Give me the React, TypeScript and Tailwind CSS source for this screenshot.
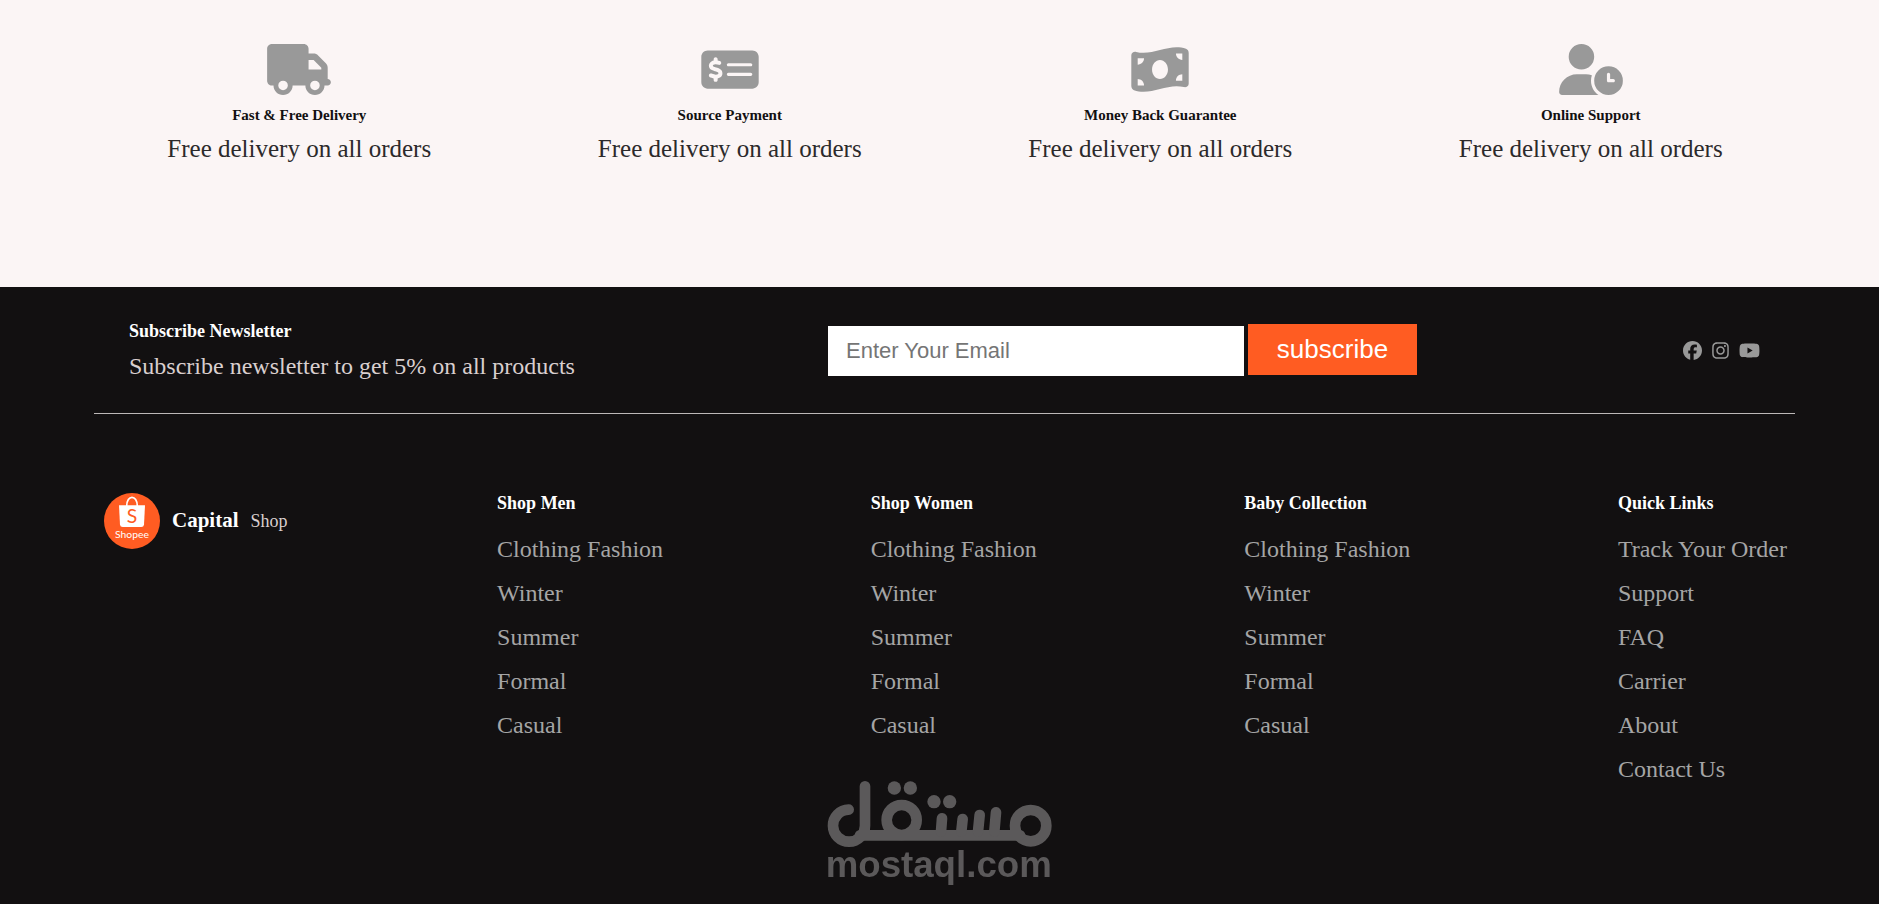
import React from "react";
import {
  FaFacebook,
  FaInstagram,
  FaMoneyBillWave,
  FaMoneyCheckDollar,
  FaTruck,
  FaUserClock,
  FaYoutube,
} from "react-icons/fa6";

const features = [
  { icon: FaTruck, title: "Fast & Free Delivery" },
  { icon: FaMoneyCheckDollar, title: "Source Payment" },
  { icon: FaMoneyBillWave, title: "Money Back Guarantee" },
  { icon: FaUserClock, title: "Online Support" },
];

const clothes = ["Clothing Fashion", "Winter", "Summer", "Formal", "Casual"];

const columns = [
  { title: "Shop Men", links: clothes },
  { title: "Shop Women", links: clothes },
  { title: "Baby Collection", links: clothes },
  {
    title: "Quick Links",
    links: ["Track Your Order", "Support", "FAQ", "Carrier", "About", "Contact Us"],
  },
];

const socials = [
  { icon: FaFacebook, label: "Facebook", size: "h-[19px] w-[19px]" },
  { icon: FaInstagram, label: "Instagram", size: "h-[19px] w-[17px]" },
  { icon: FaYoutube, label: "YouTube", size: "h-[19px] w-[21px]" },
];

const ShopLogo: React.FC = () => (
  <svg viewBox="0 0 168 168" className="h-14 w-14" aria-hidden="true">
    <circle cx="84" cy="84" r="84" fill="#ff5c22" />
    <path d="M68 40c0-36 32-36 32 0" fill="none" stroke="#fff" strokeWidth="5" />
    <path d="M45 37h78l-3 58q-1 7-8 7H56q-7 0-8-7z" fill="#fff" />
    <text
      x="84"
      y="89"
      textAnchor="middle"
      fontSize="58"
      fill="#ff5c22"
      className="font-['Lato',sans-serif]"
    >
      S
    </text>
    <text
      x="84"
      y="135"
      textAnchor="middle"
      fontSize="31"
      fill="#fff"
      className="font-['Lato',sans-serif]"
    >
      Shopee
    </text>
  </svg>
);

const Watermark: React.FC = () => (
  <svg
    viewBox="80 60 680 324"
    className="pointer-events-none fixed bottom-[17px] left-1/2 h-[108px] w-[227px] -translate-x-1/2"
    role="img"
    aria-label="mostaql.com"
  >
    <g fill="none" stroke="#5b595a" strokeWidth="32" strokeLinecap="round">
      <path d="M146 152a48 48 0 1 0 49 48V82" />
      <circle cx="305" cy="183" r="45" />
      <circle cx="692" cy="200" r="47" />
      <path d="M180 229H660" />
      <path d="M426 178l-3 40M488 180l-4 38M539 168l-5 50M588 160l-5 58" />
    </g>
    <g fill="#5b595a">
      <circle cx="283" cy="87" r="20" />
      <circle cx="331" cy="87" r="20" />
      <circle cx="402" cy="128" r="20" />
      <circle cx="449" cy="128" r="20" />
      <text
        x="77"
        y="353"
        fontSize="110"
        className="font-['Liberation_Sans',Arial,sans-serif] font-bold"
      >
        mostaql.com
      </text>
    </g>
  </svg>
);

const App: React.FC = () => {
  return (
    <div className="min-h-screen bg-[#121011] font-['Liberation_Serif','Times_New_Roman',serif]">
      {/* Features */}
      <section className="grid grid-cols-4 bg-[#fbf5f5] pt-11 pr-[73px] pb-[123px] pl-[84px] text-center">
        {features.map(({ icon: Icon, title }) => (
          <div key={title} className="flex flex-col items-center">
            <Icon className="h-[51px] w-16 text-[#999999]" />
            <h5 className="mt-2.5 text-[15px] leading-5 font-bold text-[#121011]">{title}</h5>
            <p className="mt-[9px] text-[25px] leading-[30px] text-[#2c2a2b]">
              Free delivery on all orders
            </p>
          </div>
        ))}
      </section>

      <footer className="pr-[84px] pb-24 pl-[94px]">
        {/* Newsletter */}
        <div className="flex items-center justify-between border-b border-[#bcb8b8] px-[35px] pt-8 pb-8">
          <div className="w-[433px] whitespace-nowrap">
            <h5 className="text-lg leading-6 font-bold text-white">Subscribe Newsletter</h5>
            <p className="mt-2 text-2xl leading-[30px] text-[#d9cfcf]">
              Subscribe newsletter to get 5% on all products
            </p>
          </div>

          <form
            className="flex items-baseline gap-1 font-['Liberation_Sans',Arial,sans-serif]"
            onSubmit={(e) => e.preventDefault()}
          >
            <input
              type="email"
              aria-label="Email"
              placeholder="Enter Your Email"
              className="h-[50px] w-[416px] bg-white px-[18px] text-[22px] text-black outline-none placeholder:text-[#757575]"
            />
            <button type="submit" className="h-[51px] w-[169px] bg-[#ff5c22] text-[26px] text-white">
              subscribe
            </button>
          </form>

          <div className="flex items-center gap-2.5 text-[#999999]">
            {socials.map(({ icon: Icon, label, size }) => (
              <a key={label} href="#" aria-label={label}>
                <Icon className={size} />
              </a>
            ))}
          </div>
        </div>

        {/* Links */}
        <div className="flex items-start justify-between pt-[79px] pr-2 pl-2.5">
          <a href="#" className="flex items-center pr-0.5">
            <ShopLogo />
            <span className="ml-3 text-[21px] font-bold text-white">Capital</span>
            <span className="ml-3 text-lg text-[#d9cfcf]">Shop</span>
          </a>

          {columns.map(({ title, links }) => (
            <div key={title}>
              <h5 className="text-lg leading-5 font-bold text-white">{title}</h5>
              <ul className="mt-3.5">
                {links.map((link) => (
                  <li key={link} className="text-2xl leading-[44px] text-[#a5a5a5]">
                    <a href="#">{link}</a>
                  </li>
                ))}
              </ul>
            </div>
          ))}
        </div>
      </footer>

      <Watermark />
    </div>
  );
};

export default App;
